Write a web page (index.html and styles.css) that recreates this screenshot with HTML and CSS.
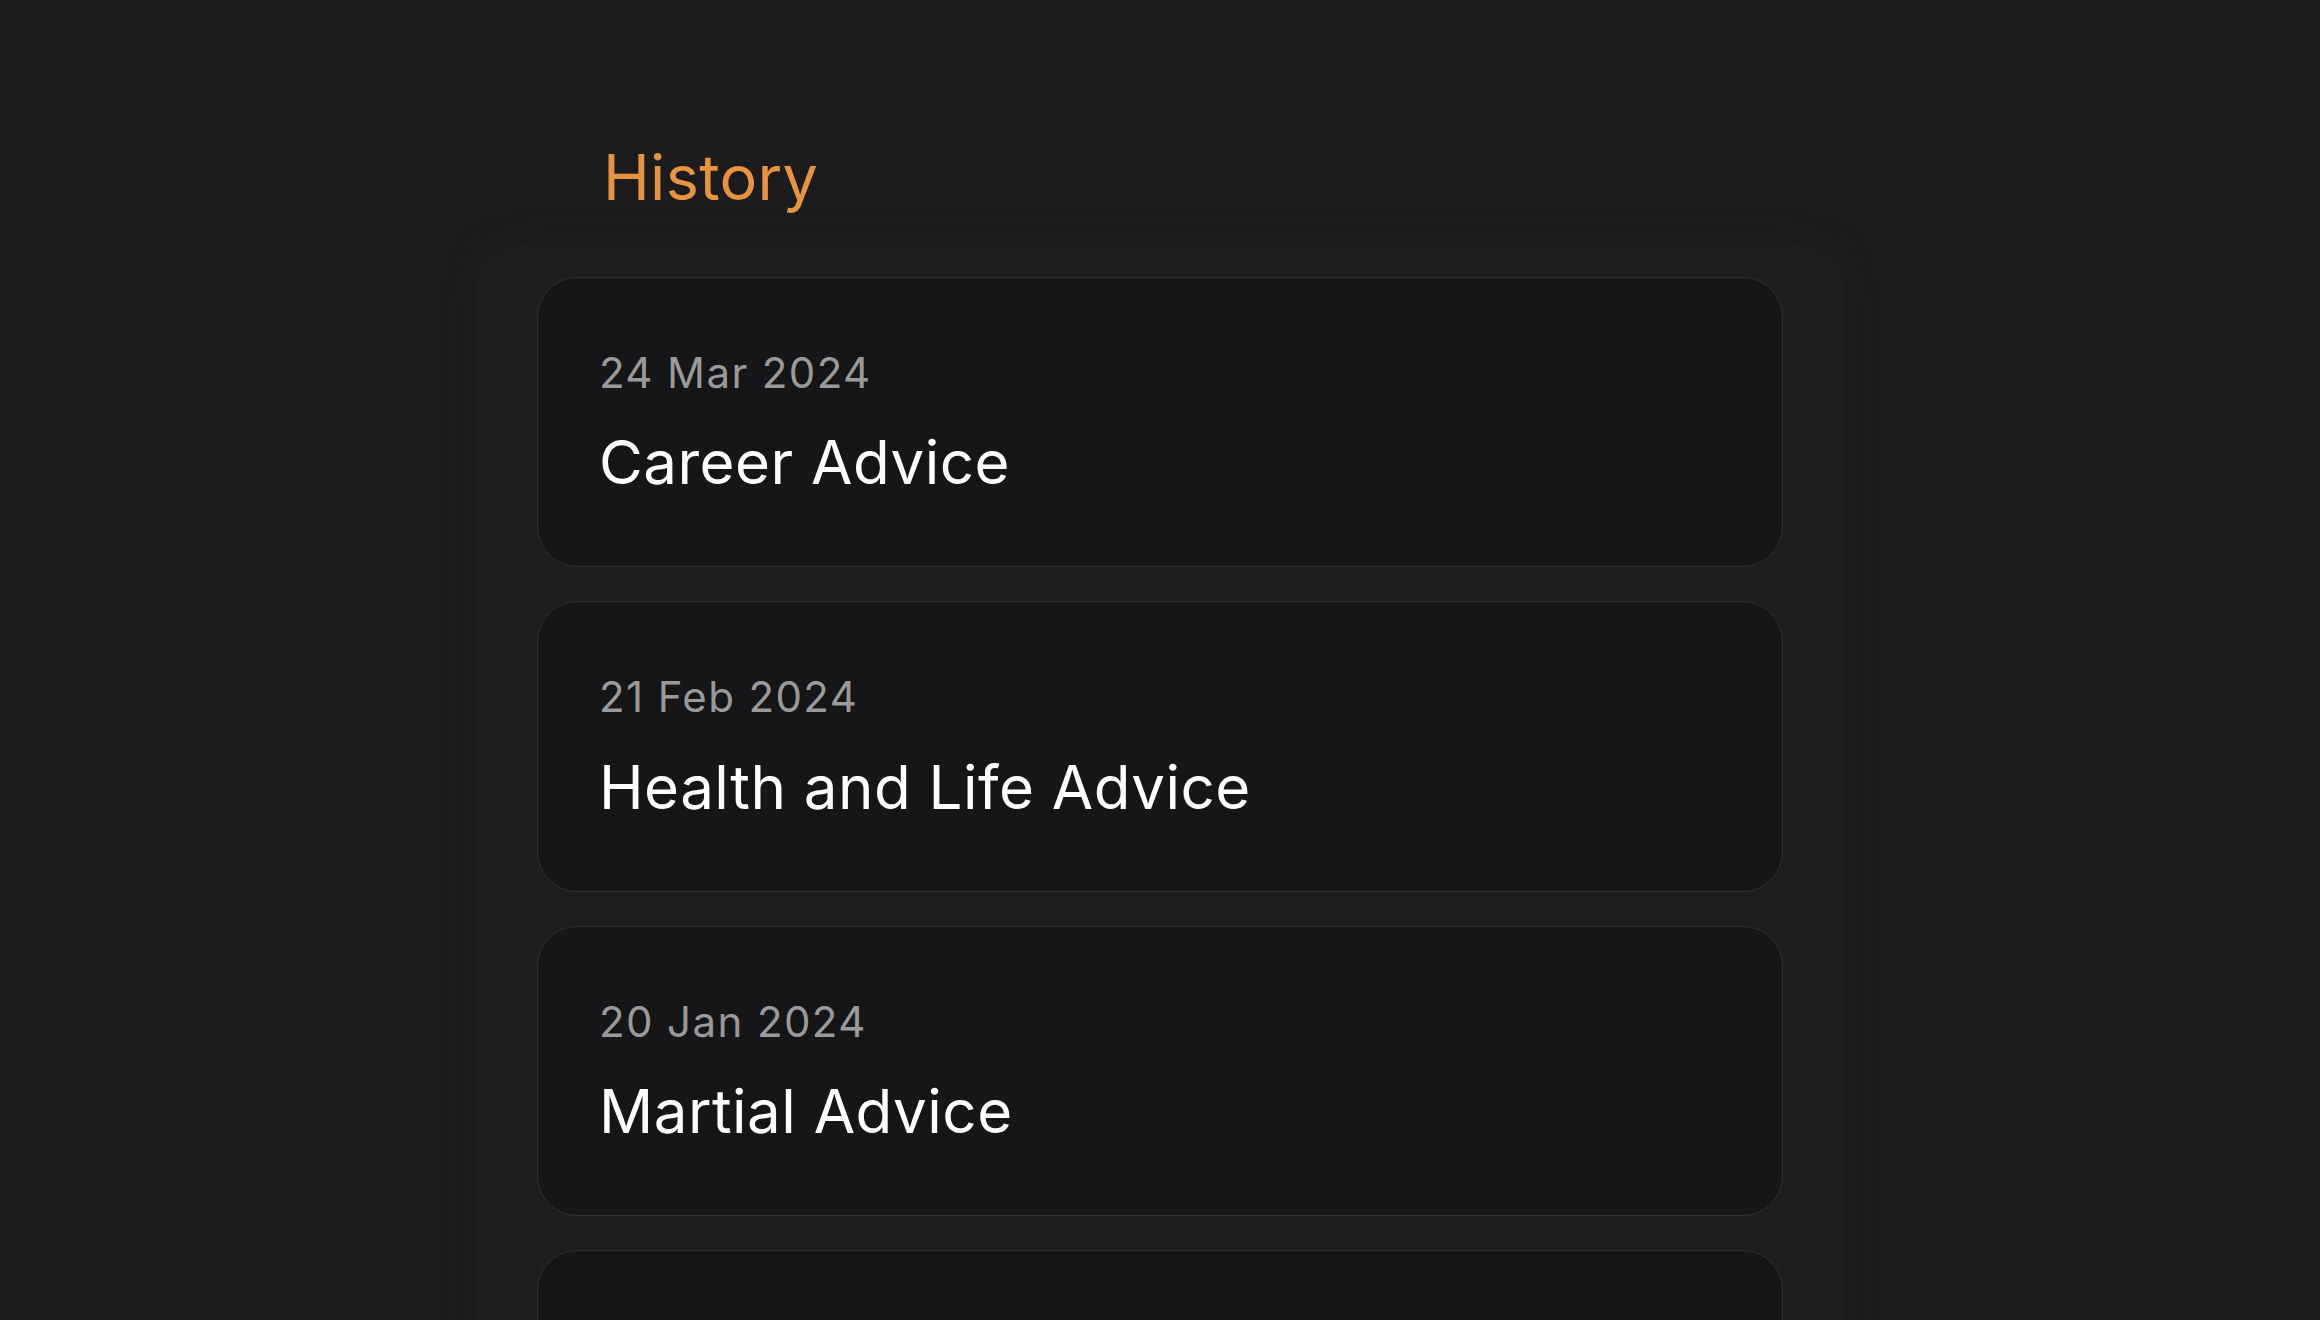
FILE: index.html
```html
<!DOCTYPE html>
<html lang="en">
<head>
    <meta charset="UTF-8">
    <meta name="viewport" content="width=device-width, initial-scale=1.0">
    <title>History</title>
    <link rel="stylesheet" href="styles.css">
</head>
<body>
    <main class="history">
        <h1 class="history-title">History</h1>

        <div class="history-panel">
            <ul class="history-list">
                <li class="history-card">
                    <span class="card-date">24 Mar 2024</span>
                    <span class="card-title">Career Advice</span>
                </li>
                <li class="history-card">
                    <span class="card-date">21 Feb 2024</span>
                    <span class="card-title">Health and Life Advice</span>
                </li>
                <li class="history-card">
                    <span class="card-date">20 Jan 2024</span>
                    <span class="card-title">Martial Advice</span>
                </li>
                <li class="history-card">
                    <span class="card-date">12 Dec 2023</span>
                    <span class="card-title">Finance Advice</span>
                </li>
            </ul>
        </div>
    </main>
</body>
</html>
```

FILE: styles.css
```css
body {
    margin: 0;
    font-family: 'Inter', 'Liberation Sans', sans-serif;
    background-color: #1c1c1e;
    color: #ffffff;
    overflow: hidden;
}

.history {
    width: 1246px;
    margin: 0 auto;
    padding-top: 146px;
}

.history-title {
    margin: 0 0 0 66px;
    font-size: 63px;
    font-weight: 400;
    line-height: 1;
    letter-spacing: 0.3px;
    color: #e8933f;
}

.history-panel {
    margin: 36px -60px 0;
    padding: 32px 60px 0;
    background-color: #1e1e20;
    border-radius: 40px;
    box-shadow: 0 0 30px #1e1e20;
}

.history-list {
    list-style: none;
    margin: 0;
    padding: 0;
    display: flex;
    flex-direction: column;
    gap: 34px;
}

.history-card {
    display: flex;
    flex-direction: column;
    padding: 70px 61px 68px;
    background-color: #161618;
    border: 1px solid #303033;
    border-radius: 40px;
}

.card-date {
    font-size: 42px;
    line-height: 1.2;
    letter-spacing: 1.4px;
    color: #9a9a9c;
}

.card-title {
    margin-top: 28px;
    font-size: 60px;
    line-height: 1.2;
    letter-spacing: 0.5px;
    color: #ffffff;
}
```
